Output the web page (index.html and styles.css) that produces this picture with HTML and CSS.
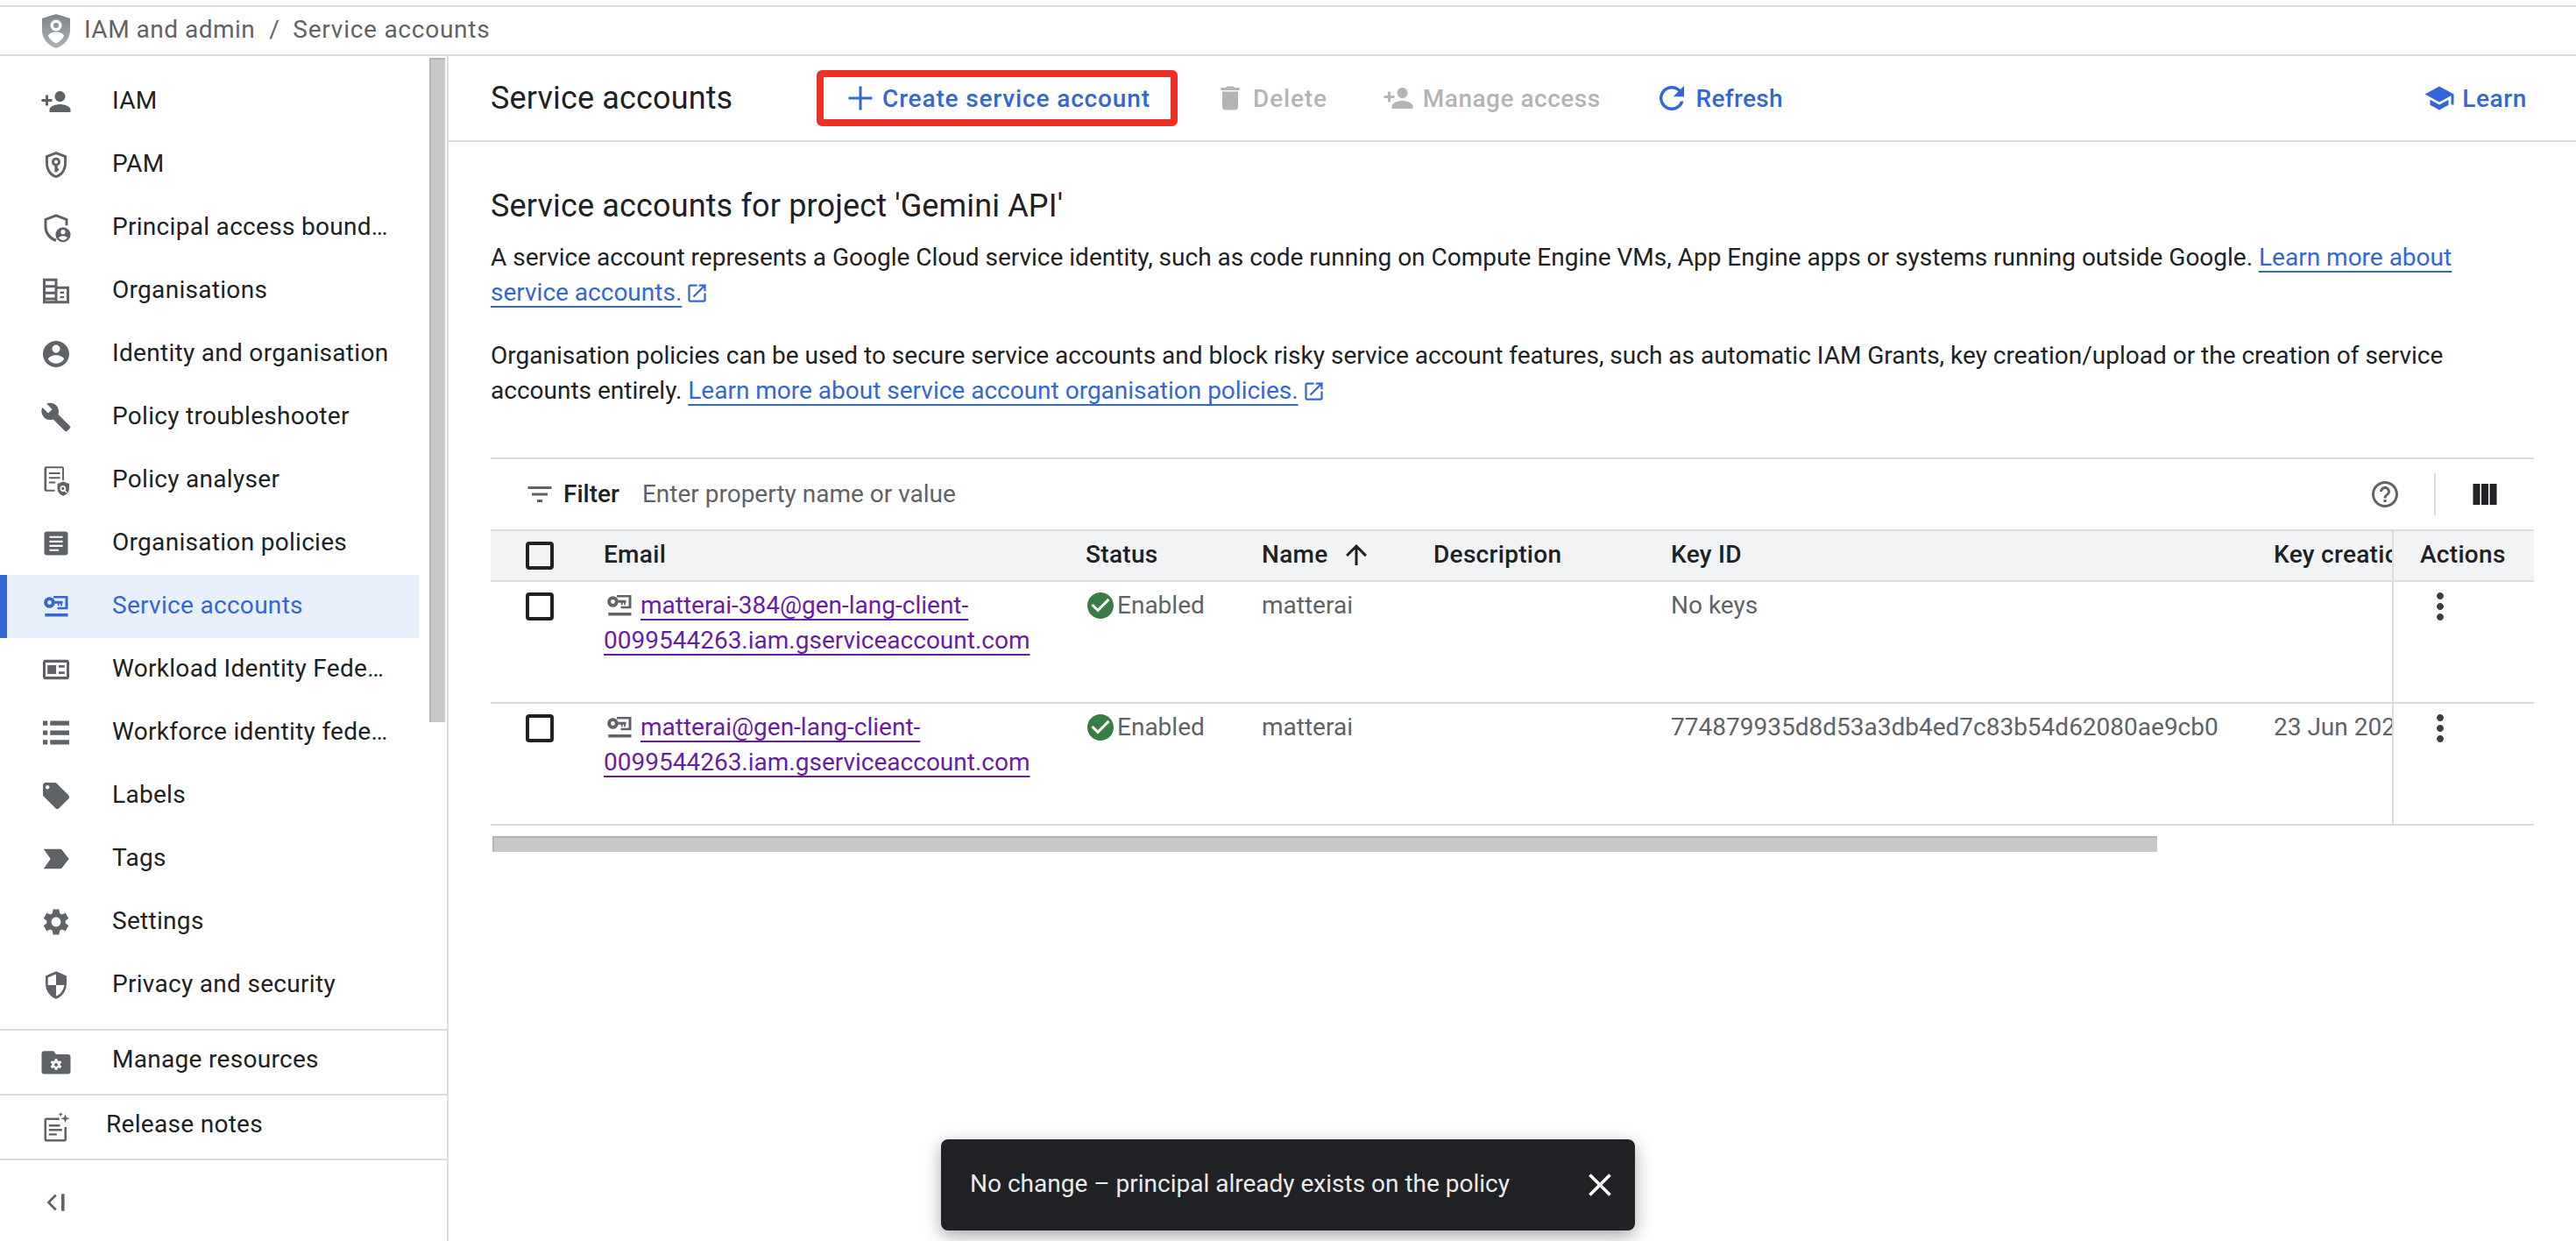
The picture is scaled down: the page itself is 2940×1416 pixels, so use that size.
FILE: index.html
```html
<!DOCTYPE html>
<html lang="en">
<head>
    <meta charset="UTF-8">
    <meta name="viewport" content="width=device-width, initial-scale=1.0">
    <title>Service accounts</title>
    <link rel="stylesheet" href="styles.css">
</head>
<body>
    <!-- Icon sprite -->
    <svg class="sprite" xmlns="http://www.w3.org/2000/svg">
        <symbol id="i-person-add" viewBox="0 0 24 24"><path d="M15 12c2.21 0 4-1.79 4-4s-1.79-4-4-4-4 1.79-4 4 1.79 4 4 4zm-9-2V7H4v3H1v2h3v3h2v-3h3v-2H6zm9 4c-2.67 0-8 1.34-8 4v2h16v-2c0-2.66-5.33-4-8-4z"/></symbol>
        <symbol id="i-pam" viewBox="0 0 24 24"><path fill-rule="evenodd" d="M12 2 4 5v6.09c0 5.05 3.41 9.76 8 10.91 4.59-1.15 8-5.86 8-10.91V5l-8-3zm0 2.1 6 2.25v4.74c0 4-2.55 7.7-6 8.84-3.45-1.14-6-4.84-6-8.84V6.35l6-2.25z"/><path fill-rule="evenodd" d="M12 6.5a3.3 3.3 0 0 0-1.1 6.41V17.5h2.2v-1h1v-1.6h-1v-2a3.3 3.3 0 0 0-1.1-6.4zm0 1.9a1.4 1.4 0 1 1 0 2.8 1.4 1.4 0 0 1 0-2.8z"/></symbol>
        <symbol id="i-boundary" viewBox="0 0 24 24"><path d="M12 1.500 3 5v6.100c0 5.300 3.700 10.200 8.800 11.400l.6-2C8.300 19.300 5 15.300 5 11.100V6.400l7-2.700 7 2.700v3.700h2V5l-9-3.500z"/><path fill-rule="evenodd" d="M17.300 11.500a5.700 5.700 0 1 0 0 11.400 5.700 5.700 0 0 0 0-11.400zm0 1.900a1.700 1.700 0 1 1 0 3.400 1.700 1.700 0 0 1 0-3.400zm0 7.900c-1.300 0-2.500-.6-3.200-1.600.3-1 2.100-1.500 3.200-1.500s2.900.5 3.200 1.500c-.7 1-1.900 1.600-3.200 1.600z"/></symbol>
        <symbol id="i-orgs" viewBox="0 0 24 24"><path fill-rule="evenodd" d="M2 2.500h11v6h9v13H2v-19zm2 2v3h7v-3H4zm0 5v3h7v-3H4zm0 5v2.500h7V14.500H4zm0 4.500v.5h7V19H4zm9-8.500v9h7v-9h-7zm2 2h3v1.500h-3V12.500zm0 3.500h3v1.500h-3V16z"/></symbol>
        <symbol id="i-account" viewBox="0 0 24 24"><path d="M12 2C6.480 2 2 6.480 2 12s4.480 10 10 10 10-4.480 10-10S17.520 2 12 2zm0 3c1.660 0 3 1.340 3 3s-1.340 3-3 3-3-1.340-3-3 1.340-3 3-3zm0 14.200c-2.500 0-4.710-1.280-6-3.220.03-1.990 4-3.080 6-3.080 1.990 0 5.970 1.090 6 3.080-1.290 1.940-3.500 3.220-6 3.220z"/></symbol>
        <symbol id="i-build" viewBox="0 0 24 24"><path d="M22.700 19l-9.100-9.100c.9-2.300.4-5-1.500-6.900-2-2-5-2.400-7.400-1.300L9 6 6 9 1.600 4.700C.4 7.100.9 10.100 2.900 12.100c1.900 1.900 4.600 2.400 6.900 1.500l9.100 9.100c.4.4 1 .4 1.400 0l2.300-2.300c.5-.4.5-1.100.1-1.400z"/></symbol>
        <symbol id="i-analyser" viewBox="0 0 24 24"><path fill-rule="evenodd" d="M4.500 1.500h12A1.500 1.500 0 0 1 18 3v9h-1.300V2.800H4.800v16.400h6.200v1.300H4.500A1.500 1.500 0 0 1 3 19V3a1.500 1.500 0 0 1 1.500-1.500z"/><path d="M6.500 6h8.500v1.400H6.500zM6.500 9.500h8.500v1.400H6.500zM6.500 13h5v1.400h-5z"/><path fill-rule="evenodd" d="M17.500 13 13 14.700v3.500c0 2.600 1.900 5 4.500 5.600 2.600-.6 4.500-3 4.500-5.600v-3.500L17.500 13zm-.3 3a2.300 2.300 0 0 1 1.900 3.600l1.400 1.400-.7.700-1.400-1.400a2.300 2.300 0 1 1-1.200-4.300zm0 1.200a1.100 1.100 0 1 0 0 2.200 1.100 1.100 0 0 0 0-2.200z"/></symbol>
        <symbol id="i-article" viewBox="0 0 24 24"><path fill-rule="evenodd" d="M5 3h14a2 2 0 0 1 2 2v14a2 2 0 0 1-2 2H5a2 2 0 0 1-2-2V5a2 2 0 0 1 2-2zm2 3.500v1.400h10V6.500H7zm0 3.400v1.400h10V9.900H7zm0 3.300v1.400h10v-1.400H7zm0 3.300v1.400h7v-1.400H7z"/></symbol>
        <symbol id="i-service" viewBox="0 0 24 24"><path fill-rule="evenodd" d="M7 4.800a4.200 4.200 0 1 1 0 8.400 4.200 4.200 0 0 1 0-8.400zm0 2.600a1.600 1.600 0 1 0 0 3.200 1.600 1.600 0 0 0 0-3.200z"/><path d="M10.800 7.800H17v2h-.4v1.700h-1.200V9.800h-1v1.700h-1.200V9.800h-2.400zM10 4h11v10.200h-8v-1.700h6V5.700h-9zM3.500 17.300H21v2.400H3.500z"/></symbol>
        <symbol id="i-workload" viewBox="0 0 24 24"><path fill-rule="evenodd" d="M4 4.500h16a2 2 0 0 1 2 2v11a2 2 0 0 1-2 2H4a2 2 0 0 1-2-2v-11a2 2 0 0 1 2-2zm0 2.200v10.600h16V6.700H4zm1.500 2h6.500v6.600H5.500V8.700zm8.500 0h4.500v1.800H14V8.700zm0 4.800h4.500v1.800H14v-1.800z"/></symbol>
        <symbol id="i-list" viewBox="0 0 24 24"><path d="M2 3h3.500v3.500H2zM7.500 3H22v3.500H7.500zM2 10.300h3.500v3.500H2zM7.500 10.300H22v3.500H7.500zM2 17.500h3.500V21H2zM7.500 17.500H22V21H7.500z"/></symbol>
        <symbol id="i-label" viewBox="0 0 24 24"><path d="M21.410 11.580l-9-9C12.050 2.220 11.550 2 11 2H4c-1.100 0-2 .9-2 2v7c0 .55.22 1.050.59 1.420l9 9c.36.36.86.58 1.410.58.55 0 1.050-.22 1.410-.59l7-7c.37-.36.59-.86.59-1.410 0-.55-.23-1.060-.59-1.420zM5.500 7C4.670 7 4 6.330 4 5.500S4.670 4 5.500 4 7 4.670 7 5.500 6.330 7 5.500 7z"/></symbol>
        <symbol id="i-tag" viewBox="0 0 24 24"><path d="M2.500 4.500 15 4.510c.67 0 1.270.33 1.630.84L21.800 12l-5.170 6.650c-.36.51-.96.85-1.630.85H2.500L7.800 12 2.500 4.500z"/></symbol>
        <symbol id="i-settings" viewBox="0 0 24 24"><path d="M19.140 12.940c.04-.3.06-.61.06-.94 0-.32-.02-.64-.07-.94l2.030-1.580c.18-.14.23-.41.12-.61l-1.920-3.320c-.12-.22-.37-.29-.59-.22l-2.390.96c-.5-.38-1.030-.7-1.620-.94l-.36-2.540c-.04-.24-.24-.41-.48-.41h-3.840c-.24 0-.43.17-.47.41l-.36 2.540c-.59.24-1.130.57-1.620.94l-2.390-.96c-.22-.08-.47 0-.59.22L2.740 8.870c-.12.21-.08.47.12.61l2.030 1.580c-.05.3-.09.63-.09.94s.02.64.07.94l-2.030 1.580c-.18.14-.23.41-.12.61l1.920 3.320c.12.22.37.29.59.22l2.390-.96c.5.38 1.030.7 1.620.94l.36 2.54c.05.24.24.41.48.41h3.840c.24 0 .44-.17.47-.41l.36-2.540c.59-.24 1.130-.56 1.620-.94l2.390.96c.22.08.47 0 .59-.22l1.920-3.320c.12-.22.07-.47-.12-.61l-2.010-1.580zM12 15.600c-1.980 0-3.600-1.620-3.600-3.600s1.620-3.600 3.600-3.600 3.600 1.620 3.600 3.600-1.620 3.600-3.600 3.600z"/></symbol>
        <symbol id="i-security" viewBox="0 0 24 24"><path d="M12 1.500 4 5v6c0 5.200 3.400 10 8 11.500 4.600-1.500 8-6.300 8-11.500V5l-8-3.500zm0 10.500h6.200c-.5 3.900-2.900 7.300-6.200 8.400V12H5.800V6.300L12 3.600V12z"/></symbol>
        <symbol id="i-folder" viewBox="0 0 24 24"><path fill-rule="evenodd" d="M3 3.500h7l2 2.500h9a2 2 0 0 1 2 2v11a2 2 0 0 1-2 2H3a2 2 0 0 1-2-2V5.500a2 2 0 0 1 2-2zm8.100 6-.3 1.400-.8.4-1.300-.5-.9 1.500 1.100.9v1l-1.100.9.9 1.500 1.300-.5.8.4.3 1.400h1.800l.3-1.400.8-.4 1.300.5.9-1.500-1.100-.9v-1l1.100-.9-.9-1.500-1.300.5-.8-.4-.3-1.400h-1.800zm.9 3.200a1.300 1.300 0 1 1 0 2.600 1.300 1.300 0 0 1 0-2.600z"/></symbol>
        <symbol id="i-notes" viewBox="0 0 24 24"><path fill-rule="evenodd" d="M4.500 5h10v1.700H4.700v14.600h13.600V12H20v9.500a1.500 1.500 0 0 1-1.500 1.500h-14A1.500 1.500 0 0 1 3 21.500v-15A1.500 1.500 0 0 1 4.500 5z"/><path d="M6.500 10h8.500v1.600H6.500zM6.500 13.400h10v1.600h-10zM6.500 16.800h6v1.600h-6zM19 2l.9 2.600L22.500 5.500l-2.600.9L19 9l-.9-2.600-2.600-.9 2.600-.9zM15.500.5l.5 1.300 1.300.5-1.300.5-.5 1.300-.5-1.300-1.300-.5 1.300-.5z"/></symbol>
        <symbol id="i-collapse" viewBox="0 0 24 24"><path d="M11.200 5.700 12.500 7 7.500 12l5 5-1.300 1.300L5 12zM16 5.500h2.400v13H16z"/></symbol>
        <symbol id="i-add" viewBox="0 0 24 24"><path d="M21 13h-8v8h-2v-8H3v-2h8V3h2v8h8v2z"/></symbol>
        <symbol id="i-delete" viewBox="0 0 24 24"><path d="M6 19c0 1.100.9 2 2 2h8c1.100 0 2-.9 2-2V7H6v12zM19 4h-3.500l-1-1h-5l-1 1H5v2h14V4z"/></symbol>
        <symbol id="i-refresh" viewBox="0 0 24 24"><path d="M17.650 6.350C16.200 4.900 14.210 4 12 4c-4.420 0-7.990 3.580-7.990 8s3.570 8 7.990 8c3.730 0 6.840-2.550 7.730-6h-2.080c-.82 2.330-3.040 4-5.650 4-3.310 0-6-2.690-6-6s2.690-6 6-6c1.660 0 3.140.69 4.220 1.780L13 11h7V4l-2.350 2.350z"/></symbol>
        <symbol id="i-school" viewBox="0 0 24 24"><path d="M5 13.180v4L12 21l7-3.820v-4L12 17l-7-3.820zM12 3 1 9l11 6 9-4.910V17h2V9L12 3z"/></symbol>
        <symbol id="i-open" viewBox="0 0 24 24"><path d="M19 19H5V5h7V3H5c-1.110 0-2 .9-2 2v14c0 1.100.89 2 2 2h14c1.100 0 2-.9 2-2v-7h-2v7zM14 3v2h3.590l-9.830 9.830 1.410 1.410L19 6.410V10h2V3h-7z"/></symbol>
        <symbol id="i-filter" viewBox="0 0 24 24"><path d="M10 18h4v-2h-4v2zM3 6v2h18V6H3zm3 7h12v-2H6v2z"/></symbol>
        <symbol id="i-help" viewBox="0 0 24 24"><path d="M11 18h2v-2h-2v2zm1-16C6.480 2 2 6.480 2 12s4.480 10 10 10 10-4.480 10-10S17.520 2 12 2zm0 18c-4.410 0-8-3.590-8-8s3.590-8 8-8 8 3.590 8 8-3.590 8-8 8zm0-14c-2.210 0-4 1.790-4 4h2c0-1.100.9-2 2-2s2 .9 2 2c0 2-3 1.750-3 5h2c0-2.250 3-2.500 3-5 0-2.210-1.790-4-4-4z"/></symbol>
        <symbol id="i-columns" viewBox="0 0 24 24"><path d="M3 4h5.300v16H3zM9.350 4h5.300v16h-5.300zM15.700 4H21v16h-5.300z"/></symbol>
        <symbol id="i-arrow-up" viewBox="0 0 24 24"><path d="M4 12l1.410 1.410L11 7.830V20h2V7.830l5.580 5.590L20 12l-8-8-8 8z"/></symbol>
        <symbol id="i-more" viewBox="0 0 24 24"><path d="M12 8c1.100 0 2-.9 2-2s-.9-2-2-2-2 .9-2 2 .9 2 2 2zm0 2c-1.100 0-2 .9-2 2s.9 2 2 2 2-.9 2-2-.9-2-2-2zm0 6c-1.100 0-2 .9-2 2s.9 2 2 2 2-.9 2-2-.9-2-2-2z"/></symbol>
        <symbol id="i-check" viewBox="0 0 24 24"><path d="M12 2C6.480 2 2 6.480 2 12s4.480 10 10 10 10-4.480 10-10S17.520 2 12 2zm-2 15l-5-5 1.410-1.410L10 14.170l7.590-7.590L19 8l-9 9z"/></symbol>
        <symbol id="i-close" viewBox="0 0 24 24"><path d="M19 6.410 17.590 5 12 10.590 6.410 5 5 6.410 10.590 12 5 17.590 6.410 19 12 13.410 17.590 19 19 17.590 13.410 12z"/></symbol>
    </svg>

    <!-- Breadcrumb -->
    <div class="topline"></div>
    <div class="breadcrumb">
        <svg class="logo" viewBox="0 0 32 39">
            <defs>
                <linearGradient id="logoFill" x1="0" y1="0" x2="0" y2="1">
                    <stop offset="0" stop-color="#7d8387"/>
                    <stop offset="1" stop-color="#aeb2b5"/>
                </linearGradient>
            </defs>
            <path fill="url(#logoFill)" d="M16 0 0 5v13c0 10 6.800 18 16 21 9.200-3 16-11 16-21V5L16 0z"/>
            <path fill="#fff" fill-rule="evenodd" d="M16 6.500a6.500 6.500 0 1 1 0 13 6.500 6.500 0 0 1 0-13zm0 3.500a3 3 0 1 0 0 6 3 3 0 0 0 0-6z"/>
            <path fill="#fff" d="M16 20.500c4.500 0 8.500 2 9 4.500-1.800 3.800-5 6.800-9 8.300-4-1.500-7.200-4.500-9-8.300.5-2.500 4.500-4.500 9-4.500z"/>
        </svg>
        <span>IAM and admin</span>
        <span class="crumb-sep">/</span>
        <span class="crumb-last">Service accounts</span>
    </div>

    <div class="shell">
        <!-- Sidebar -->
        <aside class="sidebar">
            <div class="nav-wrap">
                <nav class="nav">
                    <a class="nav-item" href="#"><svg class="ico"><use href="#i-person-add"/></svg><span>IAM</span></a>
                    <a class="nav-item" href="#"><svg class="ico"><use href="#i-pam"/></svg><span>PAM</span></a>
                    <a class="nav-item" href="#"><svg class="ico"><use href="#i-boundary"/></svg><span>Principal access bound…</span></a>
                    <a class="nav-item" href="#"><svg class="ico"><use href="#i-orgs"/></svg><span>Organisations</span></a>
                    <a class="nav-item" href="#"><svg class="ico"><use href="#i-account"/></svg><span>Identity and organisation</span></a>
                    <a class="nav-item" href="#"><svg class="ico"><use href="#i-build"/></svg><span>Policy troubleshooter</span></a>
                    <a class="nav-item" href="#"><svg class="ico"><use href="#i-analyser"/></svg><span>Policy analyser</span></a>
                    <a class="nav-item" href="#"><svg class="ico"><use href="#i-article"/></svg><span>Organisation policies</span></a>
                    <a class="nav-item active" href="#"><svg class="ico"><use href="#i-service"/></svg><span>Service accounts</span></a>
                    <a class="nav-item" href="#"><svg class="ico"><use href="#i-workload"/></svg><span>Workload Identity Fede…</span></a>
                    <a class="nav-item" href="#"><svg class="ico"><use href="#i-list"/></svg><span>Workforce identity fede…</span></a>
                    <a class="nav-item" href="#"><svg class="ico"><use href="#i-label"/></svg><span>Labels</span></a>
                    <a class="nav-item" href="#"><svg class="ico"><use href="#i-tag"/></svg><span>Tags</span></a>
                    <a class="nav-item" href="#"><svg class="ico"><use href="#i-settings"/></svg><span>Settings</span></a>
                    <a class="nav-item" href="#"><svg class="ico"><use href="#i-security"/></svg><span>Privacy and security</span></a>
                </nav>
                <div class="nav-thumb"></div>
            </div>
            <a class="foot-item" href="#"><svg class="ico"><use href="#i-folder"/></svg><span>Manage resources</span></a>
            <a class="foot-item foot-notes" href="#"><svg class="ico"><use href="#i-notes"/></svg><span>Release notes</span></a>
            <div class="collapse"><svg class="ico"><use href="#i-collapse"/></svg></div>
        </aside>

        <!-- Main Content -->
        <main class="main">
            <div class="toolbar">
                <h1 class="page-title">Service accounts</h1>
                <a class="tool tool-create" href="#"><svg class="ico"><use href="#i-add"/></svg>Create service account</a>
                <span class="tool tool-delete off"><svg class="ico"><use href="#i-delete"/></svg>Delete</span>
                <span class="tool tool-access off"><svg class="ico"><use href="#i-person-add"/></svg>Manage access</span>
                <a class="tool tool-refresh" href="#"><svg class="ico"><use href="#i-refresh"/></svg>Refresh</a>
                <a class="tool tool-learn" href="#"><svg class="ico"><use href="#i-school"/></svg>Learn</a>
            </div>

            <div class="content">
                <h2 class="section-title">Service accounts for project 'Gemini API'</h2>
                <p class="intro">A service account represents a Google Cloud service identity, such as code running on Compute Engine VMs, App Engine apps or systems running outside Google. <a class="link" href="#">Learn more about service accounts.</a> <svg class="ico-open"><use href="#i-open"/></svg></p>
                <p class="intro">Organisation policies can be used to secure service accounts and block risky service account features, such as automatic IAM Grants, key creation/upload or the creation of service accounts entirely. <a class="link" href="#">Learn more about service account organisation policies.</a> <svg class="ico-open"><use href="#i-open"/></svg></p>

                <div class="filter-bar">
                    <svg class="ico ico-filter"><use href="#i-filter"/></svg>
                    <span class="filter-label">Filter</span>
                    <span class="filter-input">Enter property name or value</span>
                    <svg class="ico ico-help"><use href="#i-help"/></svg>
                    <span class="filter-divider"></span>
                    <svg class="ico ico-columns"><use href="#i-columns"/></svg>
                </div>

                <table class="accounts">
                    <colgroup>
                        <col class="c-check"><col class="c-email"><col class="c-status"><col class="c-name"><col class="c-desc"><col class="c-key"><col class="c-date"><col class="c-actions">
                    </colgroup>
                    <thead>
                        <tr>
                            <th class="cell-check"><span class="checkbox"></span></th>
                            <th>Email</th>
                            <th>Status</th>
                            <th>Name<svg class="ico ico-sort"><use href="#i-arrow-up"/></svg></th>
                            <th>Description</th>
                            <th>Key ID</th>
                            <th class="cell-clip">Key creation date</th>
                            <th class="cell-actions">Actions</th>
                        </tr>
                    </thead>
                    <tbody>
                        <tr>
                            <td class="cell-check"><span class="checkbox"></span></td>
                            <td class="cell-email"><svg class="ico ico-key"><use href="#i-service"/></svg><a class="mail" href="#">matterai-384@gen-lang-client-0099544263.iam.gserviceaccount.com</a></td>
                            <td><span class="status"><svg class="ico ico-ok"><use href="#i-check"/></svg>Enabled</span></td>
                            <td>matterai</td>
                            <td></td>
                            <td>No keys</td>
                            <td class="cell-clip"></td>
                            <td class="cell-actions"><svg class="ico ico-more"><use href="#i-more"/></svg></td>
                        </tr>
                        <tr>
                            <td class="cell-check"><span class="checkbox"></span></td>
                            <td class="cell-email"><svg class="ico ico-key"><use href="#i-service"/></svg><a class="mail" href="#">matterai@gen-lang-client-0099544263.iam.gserviceaccount.com</a></td>
                            <td><span class="status"><svg class="ico ico-ok"><use href="#i-check"/></svg>Enabled</span></td>
                            <td>matterai</td>
                            <td></td>
                            <td>774879935d8d53a3db4ed7c83b54d62080ae9cb0</td>
                            <td class="cell-clip">23 Jun 2025</td>
                            <td class="cell-actions"><svg class="ico ico-more"><use href="#i-more"/></svg></td>
                        </tr>
                    </tbody>
                </table>
                <div class="table-thumb"></div>
            </div>
        </main>
    </div>

    <!-- Toast -->
    <div class="toast">
        <span>No change – principal already exists on the policy</span>
        <svg class="ico ico-close"><use href="#i-close"/></svg>
    </div>
</body>
</html>
```

FILE: styles.css
```css
/* Global Styles */
html, body {
    height: 100%;
}

body {
    margin: 0;
    height: 1416px;
    overflow: hidden;
    position: relative;
    background: #fff;
    color: #202124;
    font-family: Roboto, "Liberation Sans", sans-serif;
    font-size: 28px;
}

a {
    color: inherit;
    text-decoration: none;
}

.sprite {
    display: none;
}

.ico {
    width: 36px;
    height: 36px;
    flex: none;
    fill: currentColor;
}

/* Breadcrumb */
.topline {
    height: 6px;
    border-bottom: 2px solid #dadce0;
}

.breadcrumb {
    height: 54px;
    display: flex;
    align-items: center;
    padding-left: 48px;
    border-bottom: 2px solid #dadce0;
    color: #5f6368;
    letter-spacing: 0.5px;
}

.breadcrumb span {
    margin-top: -3px;
}

.logo {
    width: 32px;
    height: 39px;
    margin-right: 16px;
}

.breadcrumb .crumb-sep {
    margin-left: 16px;
    margin-right: 15px;
}

.breadcrumb .crumb-last {
    letter-spacing: 0.75px;
}

.shell {
    display: flex;
    height: 1352px;
}

/* Sidebar */
.sidebar {
    width: 510px;
    flex: none;
    border-right: 2px solid #dadce0;
    display: flex;
    flex-direction: column;
    letter-spacing: 0.3px;
}

.nav-wrap {
    height: 1110px;
    display: flex;
    align-items: flex-start;
    border-bottom: 2px solid #dadce0;
}

.nav {
    width: 478px;
    padding-top: 16px;
}

.nav-thumb {
    width: 16px;
    height: 756px;
    margin: 2px 0 0 12px;
    background: #c8c8c8;
    border-left: 2px solid #b4b4b4;
    border-top: 2px solid #b4b4b4;
}

.nav-item {
    height: 72px;
    display: flex;
    align-items: center;
    padding-left: 46px;
    white-space: nowrap;
}

.nav-item .ico {
    color: #5f6368;
    margin-right: 46px;
}

.nav-item span {
    margin-top: -4px;
}

.nav-item.active {
    padding-left: 38px;
    border-left: 8px solid #3367d6;
    background: #e8f0fe;
    color: #3367d6;
}

.nav-item.active .ico {
    color: #3367d6;
}

.foot-item {
    height: 72px;
    display: flex;
    align-items: center;
    padding-left: 46px;
    border-bottom: 2px solid #dadce0;
}

.foot-item .ico {
    color: #5f6368;
    margin-right: 46px;
}

.foot-item span {
    margin-top: -7px;
}

.foot-notes .ico {
    margin-right: 39px;
}

.collapse {
    flex: 1;
    display: flex;
    align-items: center;
    padding: 4px 0 0 46px;
    color: #5f6368;
}

/* Toolbar */
.main {
    flex: 1;
    min-width: 0;
}

.toolbar {
    height: 96px;
    display: flex;
    align-items: center;
    padding: 0 56px 0 48px;
    border-bottom: 2px solid #dadce0;
}

.page-title {
    margin: 0 98px 0 0;
    width: 274px;
    font-size: 36px;
    font-weight: 400;
    white-space: nowrap;
    letter-spacing: 0.15px;
}

.tool {
    display: flex;
    align-items: center;
    color: #3367d6;
    font-weight: 500;
    white-space: nowrap;
    letter-spacing: 0.85px;
}

.tool.off {
    color: #b4b4b4;
}

.tool .ico {
    margin-right: 8px;
}

.tool-create {
    width: 412px;
    height: 64px;
    box-sizing: border-box;
    padding-left: 24px;
    border: 8px solid #ee3124;
    border-radius: 6px;
}

.tool-create .ico {
    margin-right: 7px;
}

.tool-delete {
    margin-left: 42px;
}

.tool-access {
    margin-left: 63px;
    letter-spacing: 0.5px;
}

.tool-access .ico {
    margin-right: 10px;
}

.tool-refresh {
    margin-left: 60px;
    letter-spacing: 0.3px;
}

.tool-refresh .ico {
    width: 42px;
    height: 42px;
    margin-right: 7px;
}

.tool-learn {
    margin-left: auto;
    letter-spacing: 0.6px;
}

/* Intro text */
.content {
    padding: 47px 48px 0;
}

.section-title {
    margin: 0 0 17px;
    height: 48px;
    font-size: 36px;
    line-height: 52px;
    font-weight: 400;
    letter-spacing: 0.15px;
}

.intro {
    margin: 0 0 32px;
    line-height: 40px;
}

.link {
    color: #3367d6;
    text-decoration: underline;
    text-decoration-thickness: 2px;
    text-underline-offset: 6px;
}

.ico-open {
    width: 27px;
    height: 27px;
    margin-left: -3px;
    fill: #3367d6;
    vertical-align: -5px;
}

/* Filter bar */
.filter-bar {
    height: 80px;
    margin-top: 56px;
    display: flex;
    align-items: center;
    padding: 0 38px 0 38px;
    border-top: 2px solid #dadce0;
    color: #5f6368;
}

.filter-bar span {
    margin-top: -2px;
}

.ico-filter {
    color: #5f6368;
    margin-right: 9px;
}

.filter-label {
    color: #202124;
    font-weight: 500;
    margin-right: 26px;
}

.filter-input {
    flex: 1;
}

.ico-help {
    color: #5f6368;
}

.filter-bar .filter-divider {
    width: 2px;
    height: 48px;
    margin: 0 38px;
    background: #dadce0;
}

.ico-columns {
    color: #202124;
}

/* Table */
.accounts {
    width: 2332px;
    table-layout: fixed;
    border-collapse: separate;
    border-spacing: 0;
}

.c-check { width: 113px; }
.c-email { width: 550px; }
.c-status { width: 201px; }
.c-name { width: 196px; }
.c-desc { width: 271px; }
.c-key { width: 688px; }
.c-date { width: 151px; }
.c-actions { width: 162px; }

.accounts th {
    height: 53px;
    padding: 0 0 3px 16px;
    background: #f1f3f4;
    border-top: 2px solid #dadce0;
    border-bottom: 2px solid #dadce0;
    font-weight: 500;
    letter-spacing: 0.3px;
    text-align: left;
    white-space: nowrap;
    overflow: hidden;
}

.accounts td {
    height: 130px;
    padding: 7px 0 0 16px;
    border-bottom: 2px solid #dadce0;
    color: #5f6368;
    line-height: 40px;
    vertical-align: top;
    white-space: nowrap;
    overflow: hidden;
}

.accounts th.cell-check,
.accounts td.cell-check {
    padding-left: 40px;
}

.accounts th.cell-check {
    padding-bottom: 0;
    height: 56px;
}

.checkbox {
    display: block;
    width: 24px;
    height: 24px;
    border: 4px solid #202124;
    border-radius: 4px;
}

td.cell-check .checkbox {
    margin-top: 5px;
}

.accounts td.cell-email {
    white-space: normal;
    padding-right: 20px;
}

.mail {
    color: #681da8;
    text-decoration: underline;
    text-decoration-thickness: 2px;
    text-underline-offset: 6px;
}

.ico-key {
    color: #5f6368;
    vertical-align: -9px;
    margin-right: 6px;
}

.status {
    display: flex;
    align-items: center;
    height: 40px;
}

.ico-ok {
    color: #3a7d44;
    margin: 0 1px 0 -1px;
}

.ico-sort {
    margin-left: 14px;
    vertical-align: -9px;
}

.accounts th.cell-actions,
.accounts td.cell-actions {
    padding-left: 30px;
    border-left: 2px solid #dadce0;
}

.ico-more {
    display: block;
    width: 48px;
    height: 48px;
    margin: -3px 0 0 -1px;
    color: #3c4043;
}

.table-thumb {
    width: 1898px;
    height: 16px;
    margin: 12px 0 0 2px;
    background: #c8c8c8;
    border-top: 2px solid #b4b4b4;
    border-left: 2px solid #b4b4b4;
}

/* Toast */
.toast {
    position: absolute;
    left: 1074px;
    top: 1300px;
    width: 792px;
    height: 104px;
    box-sizing: border-box;
    padding: 0 18px 0 33px;
    display: flex;
    align-items: center;
    justify-content: space-between;
    background: #202124;
    border-radius: 8px;
    box-shadow: 0 6px 20px rgba(0, 0, 0, 0.35);
    color: #e8eaed;
}

.toast span {
    margin-top: -3px;
}

.ico-close {
    width: 44px;
    height: 44px;
    color: #fff;
}
```
